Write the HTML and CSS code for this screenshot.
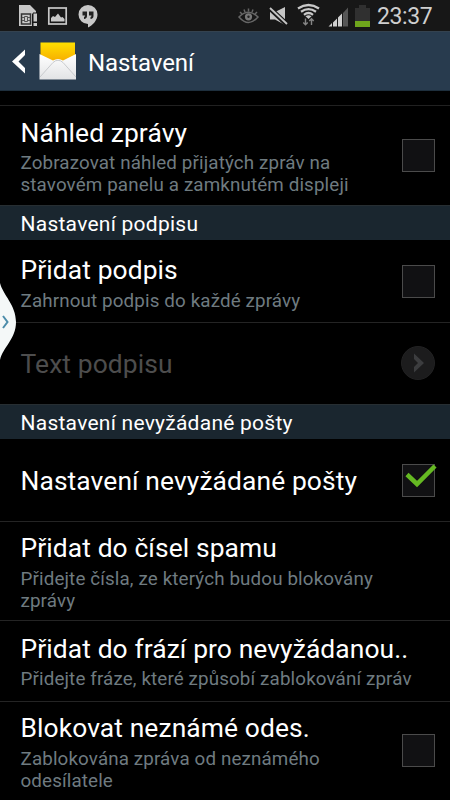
FILE: index.html
```html
<!DOCTYPE html>
<html lang="cs">
<head>
<meta charset="utf-8">
<title>Nastavení</title>
<link rel="stylesheet" href="styles.css">
</head>
<body>
<div class="status">
  <svg class="status-left" width="120" height="31" viewBox="0 0 120 31">
    <path fill="#c8c8c8" d="M19 5H30L36 11V14H32V26H19Z"/>
    <path fill="none" stroke="#333" stroke-width="1.5" d="M21.5 14H30.500V24H21.500Z"/>
    <path fill="none" stroke="#555" stroke-width="1" d="M24.500 16.500h3v5h-3zM22 17.500h2M22 20.500h2M28 17.500h2M28 20.500h2"/>
    <path fill="#c8c8c8" stroke="#171717" stroke-width="1" d="M33 13h4.500v9H33zM33 22.500h4.500v4H33z"/>
    <rect x="48.800" y="8" width="17.400" height="16" fill="none" stroke="#c8c8c8" stroke-width="1.700"/>
    <path fill="#c8c8c8" d="M51 21.500V18L53 16 55 17 58 13.500 61 17.500 62.500 17 64.500 19V21.500Z"/>
    <path fill="#c8c8c8" d="M88 5A9.500 9.500 0 0 0 88 24V27.500C93 25 97.500 20 97.500 14.500A9.500 9.500 0 0 0 88 5Z"/>
    <path fill="#222" d="M82.500 11.500H87V16Q87 18.500 84 19V17Q85 16.800 85 15.500H82.500ZM89 11.500H93.500V16Q93.500 18.500 90.500 19V17Q91.500 16.800 91.500 15.500H89Z"/>
  </svg>
  <svg class="status-right" width="140" height="31" viewBox="236 0 140 31">
    <g fill="none" stroke="#666" stroke-width="1.500">
      <path d="M239 17Q248.500 7.500 258 17Q248.500 28 239 17Z"/>
      <path d="M240 12l2 2M244 9.500l1 2.500M248.500 8.500v3M253 9.500l-1 2.500M257 12l-2 2"/>
    </g>
    <circle cx="248.500" cy="16.800" r="3.600" fill="#777"/>
    <circle cx="248.500" cy="16.800" r="1.200" fill="#222"/>
    <path fill="#c5c5c5" d="M270 12H275L285 7V25L275 19.500H270Z"/>
    <path stroke="#171717" stroke-width="5" d="M269 7.500 287 24.500"/>
    <path stroke="#c5c5c5" stroke-width="1.800" d="M270 8 287 24"/>
    <g fill="none" stroke="#c8c8c8" stroke-width="2.300">
      <path d="M298 8.500Q308.500 1.500 319 8.500"/>
      <path d="M301 11.800Q308.500 6.500 316 11.800"/>
      <path d="M304 14.800Q308.500 11.300 313 14.800"/>
    </g>
    <path fill="#c8c8c8" d="M305.500 16.200Q308.500 14.200 311.500 16.200L308.500 19Z"/>
    <path fill="none" stroke="#858585" stroke-width="1.400" d="M305.500 18.500v6M303.300 22.500l2.200 2.300 2.200-2.300M311.500 25v-6M309.300 21l2.200-2.300 2.200 2.300"/>
    <path fill="#d0d0d0" d="M328.500 26.500 332 23V26.500ZM333 22.500 337 18.500V26.500H333ZM338 17.500 342 13.500V26.500H338Z"/>
    <path fill="#999" d="M343 12.500 343.500 12V26.500H343Z"/>
    <path fill="#555" d="M344 12 348 7.500V26.500H344Z"/>
    <path fill="#303030" d="M355 8H359V5H366V8H370V21H355Z"/>
    <path fill="#6fa51c" d="M355 21H370V27H355Z"/>
  </svg>
  <span class="clock">23:37</span>
</div>
<header class="bar">
  <svg class="back" width="14" height="25" viewBox="0 0 14 25"><path fill="#fff" d="M13 .5V6L6.500 12.500 13 19V24.500L0 12.500Z"/></svg>
  <svg class="mail" width="38" height="38" viewBox="0 0 38 38">
    <defs>
      <linearGradient id="y" x2="0" y2="1"><stop offset="0" stop-color="#ffe000"/><stop offset="1" stop-color="#f5a600"/></linearGradient>
      <linearGradient id="w" x2="0" y2="1"><stop offset="0" stop-color="#fff"/><stop offset="1" stop-color="#e2e3e5"/></linearGradient>
    </defs>
    <path fill="url(#y)" d="M1.500 .500H36V22H1.500Z"/>
    <path fill="url(#w)" d="M.5 12 14 18.500Q19 15.500 24 18.500L37 12V37.500H.5Z"/>
    <path fill="none" stroke="#c4c6c9" stroke-width=".9" d="M1 35 14 20.500Q19 16 24 20.500L37 35"/>
  </svg>
  <h1 class="heading">Nastavení</h1>
</header>
<main class="list">
  <div class="stub"></div>
  <div class="row tall">
    <div class="copy"><div class="title">Náhled zprávy</div><div class="note">Zobrazovat náhled přijatých zpráv na<br>stavovém panelu a zamknutém displeji</div></div>
    <span class="box"></span>
  </div>
  <h2 class="section">Nastavení podpisu</h2>
  <div class="row signature">
    <div class="copy"><div class="title">Přidat podpis</div><div class="note">Zahrnout podpis do každé zprávy</div></div>
    <span class="box"></span>
  </div>
  <div class="row single lined">
    <div class="title disabled">Text podpisu</div>
    <svg class="more" width="34" height="34" viewBox="0 0 34 34"><circle cx="17" cy="17" r="16.500" fill="#1c1c1d" stroke="#222223"/><path fill="#3c3d3f" d="M13 7.500 23 17 13 26.500V21L17 17 13 13Z"/></svg>
  </div>
  <h2 class="section">Nastavení nevyžádané pošty</h2>
  <div class="row single">
    <div class="title lower">Nastavení nevyžádané pošty</div>
    <span class="box"><svg class="tick" width="36" height="26" viewBox="0 0 36 26"><path fill="none" stroke="#65b922" stroke-width="4.500" d="M4 11.500 14 21 32 3"/></svg></span>
  </div>
  <div class="row tall lined">
    <div class="copy"><div class="title">Přidat do čísel spamu</div><div class="note">Přidejte čísla, ze kterých budou blokovány<br>zprávy</div></div>
  </div>
  <div class="row phrases lined">
    <div class="copy"><div class="title">Přidat do frází pro nevyžádanou..</div><div class="note">Přidejte fráze, které způsobí zablokování zpráv</div></div>
  </div>
  <div class="row tall lined">
    <div class="copy"><div class="title">Blokovat neznámé odes.</div><div class="note">Zablokována zpráva od neznámého<br>odesílatele</div></div>
    <span class="box"></span>
  </div>
</main>
<svg class="handle" width="18" height="84" viewBox="0 0 18 84"><path fill="#f4f8f8" d="M0 3C3 15 16 25 16 42S3 67 0 80Z"/><path fill="none" stroke="#4b8caa" stroke-width="2" d="M3 36 7.500 42 3 48"/></svg>
</body>
</html>
```

FILE: styles.css
```css
* { box-sizing: border-box; }
body {
  position: relative;
  width: 450px;
  height: 800px;
  margin: 0;
  overflow: hidden;
  background: #000;
  color: #fff;
  font-family: Roboto, sans-serif;
}
svg { display: block; flex: none; }
.status {
  display: flex;
  height: 31px;
  background: #171717;
}
.status-right { margin-left: 116px; }
.clock {
  font-size: 23px;
  line-height: 33px;
  letter-spacing: -.4px;
  padding-left: 1px;
  color: #cfcfcf;
}
.bar {
  display: flex;
  align-items: center;
  height: 60px;
  padding-left: 12px;
  background: #283b4e;
  border-top: 1px solid #34424f;
  border-bottom: 1px solid #1e2f3d;
}
.mail { margin-left: 13px; }
.heading {
  margin: 3px 0 0 11px;
  font-size: 24px;
  font-weight: 400;
  line-height: 30px;
  letter-spacing: -.1px;
}
.stub { height: 15px; border-bottom: 1px solid #212121; }
.row {
  display: flex;
  align-items: center;
  justify-content: space-between;
  padding: 0 15px 0 20.5px;
}
.copy { align-self: flex-start; }
.tall { height: 99px; }
.tall .copy { padding-top: 12px; }
.tall.lined .copy { padding-top: 11px; }
.tall.lined .note { margin-top: 5px; }
.tall.lined .box { margin-bottom: 1px; }
.signature { height: 82px; }
.signature .copy { padding-top: 15px; }
.signature .note { margin-top: 5px; }
.single { height: 82px; }
.phrases { height: 81px; }
.phrases .copy { padding-top: 13px; }
.lined { border-top: 1px solid #242424; }
.title {
  font-size: 26.4px;
  line-height: 30px;
  letter-spacing: .1px;
  white-space: nowrap;
}
.lower { padding-top: 2px; }
.note {
  margin-top: 4px;
  font-size: 18.8px;
  line-height: 22px;
  letter-spacing: .13px;
  white-space: nowrap;
  color: #6f7b80;
}
.disabled { color: #4d4d4d; }
.more { margin-bottom: 2px; }
.section {
  height: 35px;
  margin: 0;
  padding-left: 20.5px;
  font-size: 21px;
  font-weight: 400;
  line-height: 36px;
  letter-spacing: .25px;
  background: #1a262f;
  border-top: 1px solid #272e32;
}
.box {
  position: relative;
  flex: none;
  width: 33px;
  height: 33px;
  background: #111113;
  border: 1px solid #4b4b4b;
}
.tick { position: absolute; left: 0; top: -2px; }
.handle { position: absolute; left: 0; top: 280px; }
```
